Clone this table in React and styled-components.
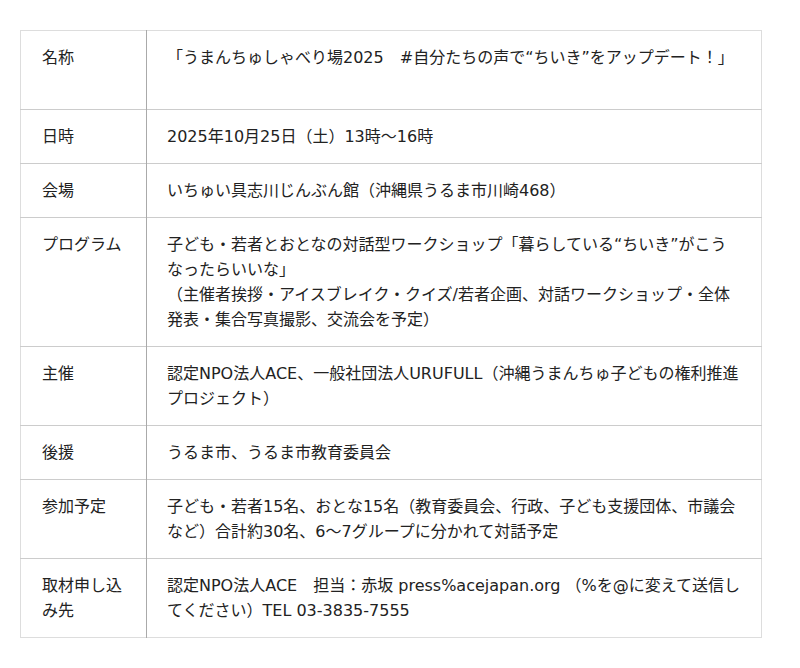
import React from "react";
import styled, { createGlobalStyle } from "styled-components";

const Global = createGlobalStyle`
  html, body { margin: 0; padding: 0; background: #fff; }
  body {
    font-family: "DejaVu Sans", "Noto Sans CJK JP", sans-serif;
    color: #222;
  }
`;

const Page = styled.div`
  padding: 30px 38px 30px 20px;
`;

const Table = styled.table`
  width: 742px;
  border-collapse: collapse;
  table-layout: fixed;
  font-size: 16px;
  line-height: 25px;
  border: 1px solid #ddd;
`;

const Row = styled.tr`
  border-top: 1px solid #ccc;
  &:first-child { border-top: 1px solid #ddd; }
`;

const Head = styled.th`
  width: 126px;
  box-sizing: border-box;
  text-align: left;
  font-weight: normal;
  vertical-align: top;
  padding: 14px 20px 14px 21px;
  border-right: 1px solid #aaa;
`;

const Cell = styled.td`
  vertical-align: top;
  padding: 14px 20px 14px 20px;
  word-break: break-all;
`;

const rows = [
  ["名称", <>「うまんちゅしゃべり場2025　#自分たちの声で“ちいき”をアップデート！」<br /><br /></>],
  ["日時", "2025年10月25日（土）13時〜16時"],
  ["会場", "いちゅい具志川じんぶん館（沖縄県うるま市川崎468）"],
  ["プログラム", <>子ども・若者とおとなの対話型ワークショップ「暮らしている“ちいき”がこうなったらいいな」<br />（主催者挨拶・アイスブレイク・クイズ/若者企画、対話ワークショップ・全体発表・集合写真撮影、交流会を予定）</>],
  ["主催", "認定NPO法人ACE、一般社団法人URUFULL（沖縄うまんちゅ子どもの権利推進プロジェクト）"],
  ["後援", "うるま市、うるま市教育委員会"],
  ["参加予定", "子ども・若者15名、おとな15名（教育委員会、行政、子ども支援団体、市議会など）合計約30名、6〜7グループに分かれて対話予定"],
  ["取材申し込み先", "認定NPO法人ACE　担当：赤坂 press%acejapan.org （%を@に変えて送信してください）TEL 03-3835-7555"],
];

export default function App() {
  return (
    <>
      <Global />
      <Page>
        <Table>
          <tbody>
            {rows.map(([h, c], i) => (
              <Row key={i}>
                <Head>{h}</Head>
                <Cell>{c}</Cell>
              </Row>
            ))}
          </tbody>
        </Table>
      </Page>
    </>
  );
}
